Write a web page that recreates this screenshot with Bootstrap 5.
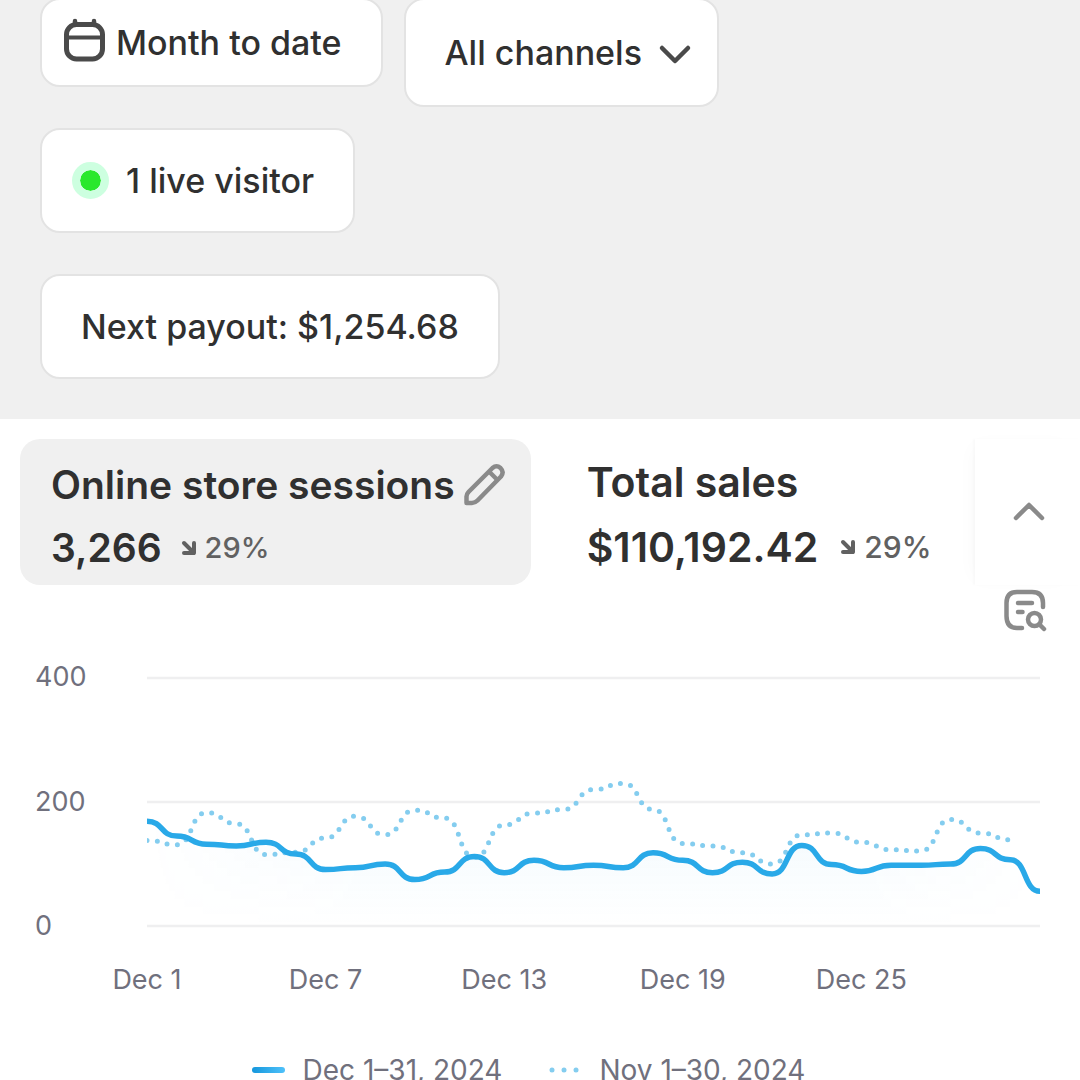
<!DOCTYPE html>
<html lang="en">
<head>
<meta charset="utf-8">
<meta name="viewport" content="width=device-width, initial-scale=1">
<title>Store analytics</title>
<link href="https://cdn.jsdelivr.net/npm/bootstrap@5.3.0/dist/css/bootstrap.min.css" rel="stylesheet">
<style>
  body { font-family: Inter, "Liberation Sans", sans-serif; color: #303030; background: #fff; overflow-x: hidden; }
  svg { display: block; flex-shrink: 0; }
  .filters { background: #f0f0f0; padding: 0 40px 40px; margin-top: -2px; }
  .filter-row { gap: 21px; }
  .pill { background-color: #fff; border: 2px solid #e3e3e3; border-radius: 20px; color: #303030; font-size: 34px; font-weight: 500; line-height: 45px; padding: 28px 39px; white-space: nowrap; }
  .pill-date { padding: 18px 39px 19px 21px; gap: 9px; }
  .pill-select { appearance: none; padding: 30px 74px 30px 39px; background-repeat: no-repeat; background-position: right 22px center; background-image: url("data:image/svg+xml,%3Csvg xmlns='http://www.w3.org/2000/svg' width='40' height='30' viewBox='0 0 40 30' fill='none' stroke='%234a4a4a' stroke-width='4.500' stroke-linecap='round' stroke-linejoin='round'%3E%3Cpath d='M7 10L20 23L33 10'/%3E%3C/svg%3E"); }
  .pill-live { padding-left: 30px; gap: 17px; margin-top: 21px; }
  .pill-payout { margin-top: 41px; }
  .live-dot { width: 37px; height: 37px; border: 8px solid #cdffe0; background: #29e82c; border-radius: 50%; background-clip: padding-box; }

  .metrics { padding: 20px 0 0 20px; }
  .metric { border: 0; border-radius: 20px; background: #fff; color: #303030; padding: 19px 24px 11px 31px; text-align: left; height: 146px; }
  .metric.active { background: #f0f0f0; }
  .metric-title { font-size: 39px; font-weight: 600; line-height: 52px; gap: 8px; white-space: nowrap; }
  .metric-value { font-size: 39px; font-weight: 600; line-height: 50px; }
  .metric-change { font-size: 29px; font-weight: 500; line-height: 36px; color: #616161; gap: 8px; }
  .metric-line { gap: 19px; margin-top: 12px; }
  .metric-sales { margin-left: 25px; padding-top: 14px; padding-right: 43px; }
  .metric-sales .metric-title, .metric-sales .metric-value { font-size: 41px; }
  .metric-sales .metric-change { font-size: 30px; }
  .metric-sales .metric-line { margin-top: 14px; gap: 22px; }
  .collapse-btn { border: 0; background: #fff; box-shadow: -8px 0 20px -8px #00000008, -2px 0 2px #00000005; padding-right: 35px; }
  .report-btn { border: 0; background: none; padding: 0; margin-right: 33px; }

  .chart-box { padding: 45px 40px 0 35px; color: #70707d; font-size: 27px; line-height: 36px; }
  .y-labels { width: 112px; margin: -19px 0 -18px; flex-shrink: 0; }
  .plot svg { width: 100%; height: auto; overflow: visible; }
  .x-axis { padding-left: 112px; margin-top: 36px; }
  .x-labels { margin-left: -10%; width: 100%; }
  .legend-row { gap: 46px; margin-top: 54px; padding-right: 18px; font-size: 28px; }
  .legend-item { gap: 17px; }
</style>
</head>
<body>
<header class="filters d-flex flex-column align-items-start">
  <div class="filter-row d-flex align-items-start flex-wrap">
    <button type="button" class="pill pill-date d-flex align-items-center">
      <svg width="44" height="48" viewBox="0 0 44 48" fill="none" stroke="#4a4a4a" stroke-width="5" stroke-linecap="round" aria-hidden="true">
        <rect x="3.500" y="6.500" width="36" height="34.500" rx="10"/>
        <path d="M4 19.500H39" stroke-width="4"/><path d="M12 3V6M31 3V6" stroke-width="4.500"/>
      </svg>
      Month to date
    </button>
    <select class="pill pill-select" aria-label="Channel"><option>All channels</option></select>
  </div>
  <button type="button" class="pill pill-live d-flex align-items-center"><span class="live-dot"></span>1 live visitor</button>
  <button type="button" class="pill pill-payout">Next payout: $1,254.68</button>
</header>

<main>
  <section class="metrics d-flex">
    <button type="button" class="metric active">
      <span class="metric-title d-flex align-items-center">Online store sessions
        <svg width="44" height="44" viewBox="0 0 44 44" fill="none" stroke="#8a8a8a" stroke-width="4.500" stroke-linejoin="round" aria-hidden="true">
          <path d="M3.500 40V33.500Q3.500 31 5.500 29L29.500 5Q33.500 1.500 37.500 5Q41.500 9 38 13.500L14.500 37.500Q12 40 9 40Z"/><path d="M26.500 9L34.500 17"/>
        </svg>
      </span>
      <span class="metric-line d-flex align-items-center">
        <span class="metric-value">3,266</span>
        <span class="metric-change d-flex align-items-center">
          <svg width="16" height="16" viewBox="0 0 16 16" fill="none" stroke="#616161" stroke-width="4" stroke-linecap="round" stroke-linejoin="round" aria-hidden="true"><path d="M3 3L13 13M13 3V13H3"/></svg>29%</span>
      </span>
    </button>
    <button type="button" class="metric metric-sales">
      <span class="metric-title d-block">Total sales</span>
      <span class="metric-line d-flex align-items-center">
        <span class="metric-value">$110,192.42</span>
        <span class="metric-change d-flex align-items-center">
          <svg width="16" height="16" viewBox="0 0 16 16" fill="none" stroke="#616161" stroke-width="4" stroke-linecap="round" stroke-linejoin="round" aria-hidden="true"><path d="M3 3L13 13M13 3V13H3"/></svg>29%</span>
      </span>
    </button>
    <button type="button" class="collapse-btn flex-grow-1 d-flex align-items-center justify-content-end" aria-label="Collapse">
      <svg width="32" height="20" viewBox="0 0 32 20" fill="none" stroke="#8a8a8a" stroke-width="4.500" stroke-linecap="round" stroke-linejoin="round"><path d="M3 16L16 3L29 16"/></svg>
    </button>
  </section>

  <div class="d-flex justify-content-end pt-1">
    <button type="button" class="report-btn" aria-label="View report">
      <svg width="44" height="44" viewBox="0 0 44 44" fill="none" stroke="#8a8a8a" stroke-width="4.500" stroke-linecap="round" stroke-linejoin="round">
        <path d="M40 18V14Q40 3 29 3H14Q3.500 3 3.500 14V27Q3.500 39 14 39H19"/><path d="M15 14H29M15 23H19.500"/><circle cx="31.500" cy="30.500" r="6.500"/><path d="M36.500 35.500L41 40"/>
      </svg>
    </button>
  </div>

  <section class="chart-box">
    <div class="d-flex">
      <div class="y-labels d-flex flex-column justify-content-between"><span>400</span><span>200</span><span>0</span></div>
      <div class="plot flex-fill">
        <svg viewBox="0 0 893 248" role="img" aria-label="Online store sessions by day">
          <defs>
            <linearGradient id="areaFill" x1="0" y1="150" x2="0" y2="248" gradientUnits="userSpaceOnUse"><stop offset="0" stop-color="#29a9e8" stop-opacity=".05"/><stop offset="1" stop-color="#29a9e8" stop-opacity="0"/></linearGradient>
            <linearGradient id="edgeFade"><stop offset="0" stop-color="#000"/><stop offset=".25" stop-color="#fff"/><stop offset=".8" stop-color="#fff"/><stop offset="1" stop-color="#000"/></linearGradient>
            <mask id="edgeMask"><rect width="893" height="248" fill="url(#edgeFade)"/></mask>
            <clipPath id="plotClip"><rect x="0" y="-10" width="893" height="270"/></clipPath>
          </defs>
          <path d="M0 0H893M0 124H893M0 248H893" stroke="#efeff0" stroke-width="2.500"/>
          <path id="area" fill="url(#areaFill)" mask="url(#edgeMask)"/>
          <g clip-path="url(#plotClip)" fill="none">
            <path id="previous" stroke="#84cdef" stroke-width="5" stroke-linecap="round" stroke-dasharray="0 10.26"/>
            <path id="current" stroke="#29a9e8" stroke-width="5.500"/>
          </g>
        </svg>
      </div>
    </div>
    <div class="x-axis">
      <div class="x-labels d-flex text-center">
        <span class="w-100">Dec 1</span><span class="w-100">Dec 7</span><span class="w-100">Dec 13</span><span class="w-100">Dec 19</span><span class="w-100">Dec 25</span>
      </div>
    </div>
    <div class="legend-row d-flex justify-content-center align-items-start">
      <span class="legend-item d-flex align-items-center">
        <svg width="34" height="6" viewBox="0 0 34 6" aria-hidden="true"><defs><linearGradient id="keyFill"><stop stop-color="#1597dc"/><stop offset="1" stop-color="#4fc1fa"/></linearGradient></defs><rect width="33" height="6" rx="3" fill="url(#keyFill)"/></svg>Dec 1–31, 2024</span>
      <span class="legend-item d-flex align-items-center">
        <svg width="34" height="6" viewBox="0 0 34 6" fill="#84cdef" aria-hidden="true"><circle cx="4" cy="3" r="2.500"/><circle cx="16" cy="3" r="2.500"/><circle cx="28" cy="3" r="2.500"/></svg>Nov 1–30, 2024</span>
    </div>
  </section>
</main>

<script src="https://cdn.jsdelivr.net/npm/bootstrap@5.3.0/dist/js/bootstrap.bundle.min.js"></script>
<script>
  // Daily sessions for both periods
  const current = [169,145,132,129,135,116,91,94,100,75,87,112,86,106,94,98,94,118,106,86,103,84,130,99,88,98,98,100,125,107,56];
  const previous = [138,131,183,165,115,119,142,177,147,187,174,111,163,182,188,220,230,188,133,129,118,100,147,150,135,123,121,172,150,139];
  const step = 893 / 30;
  const yOf = v => 248 - v * 0.62;
  // Rounded step curve: level at every data point
  function curve(values) {
    let d = `M0 ${yOf(values[0])}`;
    for (let i = 1; i < values.length; i++) {
      const a = (i - 1) * step, b = i * step;
      d += `C${a + step * 0.56} ${yOf(values[i - 1])} ${b - step * 0.56} ${yOf(values[i])} ${b} ${yOf(values[i])}`;
    }
    return d;
  }
  document.getElementById('current').setAttribute('d', curve(current));
  document.getElementById('previous').setAttribute('d', curve(previous));
  document.getElementById('area').setAttribute('d', curve(current) + 'V248H0Z');
</script>
</body>
</html>
